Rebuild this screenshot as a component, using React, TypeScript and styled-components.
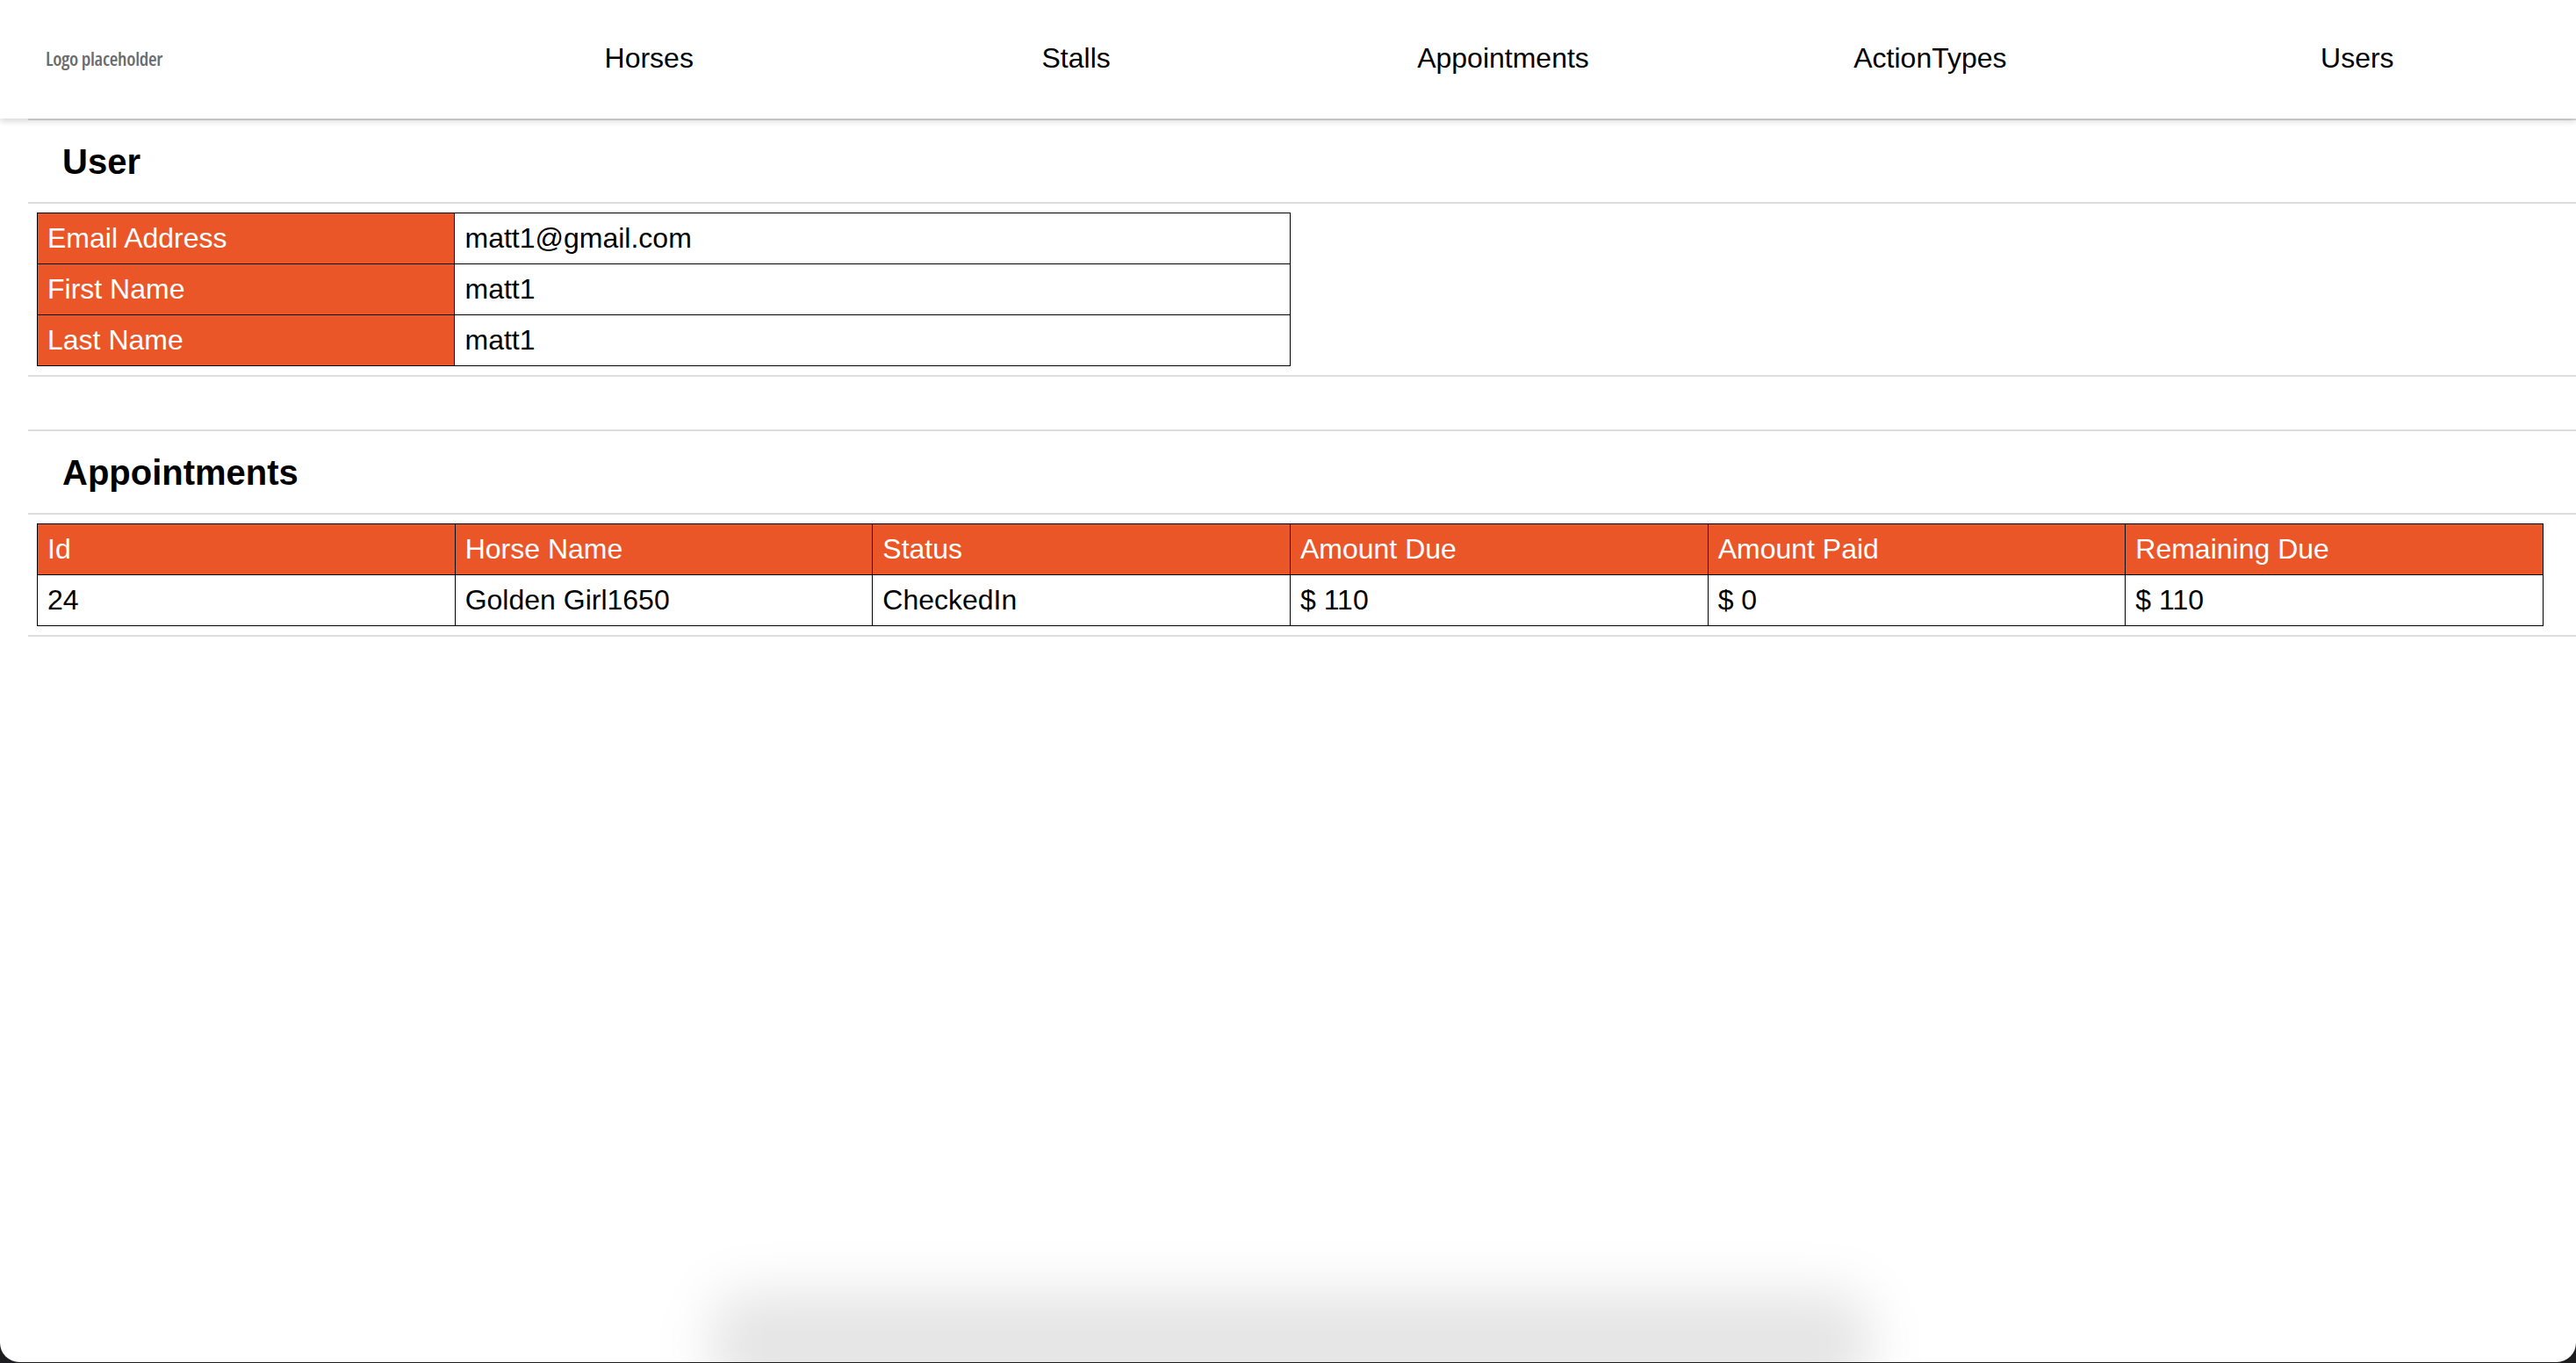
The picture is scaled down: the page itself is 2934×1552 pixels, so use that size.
import styled, { createGlobalStyle } from 'styled-components'

const GlobalStyle = createGlobalStyle`
  html, body {
    margin: 0;
    padding: 0;
    background: #1d1d1f;
  }
  body {
    font-family: "Liberation Sans", Arial, sans-serif;
    color: #000000;
  }
`

const Window = styled.div`
  position: relative;
  height: 1551px;
  background: #FFFFFF;
  border-bottom-left-radius: 22px;
  border-bottom-right-radius: 22px;
  overflow: hidden;
`

const Header = styled.header`
  position: relative;
  z-index: 1;
  display: flex;
  align-items: center;
  height: 135px;
  padding: 0 6px 3px 0;
  box-sizing: border-box;
  background: #FFFFFF;
  box-shadow: 0 3px 7px rgba(0, 0, 0, 0.16);
`

const Logo = styled.div`
  width: 496px;
  box-sizing: border-box;
  padding-left: 52px;
  font-family: "Open Sans", "Liberation Sans", sans-serif;
  font-stretch: 80%;
  font-weight: 600;
  font-size: 22px;
  color: #6b6b6b;
  letter-spacing: -0.3px;
`

const Nav = styled.nav`
  flex: 1;
  display: flex;
`

const NavLink = styled.a`
  flex: 1;
  text-align: center;
  font-size: 32px;
  color: #000000;
  text-decoration: none;
  cursor: pointer;
`

const Content = styled.main`
  display: flex;
  flex-direction: column;
  gap: 60px;
  margin-left: 32px;
`

const Card = styled.section`
  border-top: 2px solid #dddddd;
  border-bottom: 2px solid #dddddd;
`

const CardTitle = styled.h2`
  margin: 0;
  padding: 24px 0 23px 39px;
  border-bottom: 2px solid #dddddd;
  font-size: 40px;
  line-height: 46px;
  font-weight: 700;
`

const CardBody = styled.div`
  padding: 10px 0;
`

const Table = styled.table<{ $half?: boolean }>`
  margin-left: 10px;
  width: ${p => (p.$half ? 'calc((100% - 47px) / 2)' : 'calc(100% - 47px)')};
  border-collapse: collapse;
  table-layout: fixed;
  font-size: 32px;
  line-height: 37px;
`

const Th = styled.th`
  padding: 10px 11px;
  border: 1px solid #000000;
  background: #EB5629;
  color: #FFFFFF;
  font-weight: 400;
  text-align: left;
  white-space: nowrap;
`

const Td = styled.td`
  padding: 10px 11px;
  border: 1px solid #000000;
  background: #FFFFFF;
  color: #000000;
  text-align: left;
  white-space: nowrap;
`

const DockShadow = styled.div`
  position: absolute;
  left: 810px;
  bottom: -40px;
  width: 1320px;
  height: 120px;
  background: rgba(0, 0, 0, 0.1);
  filter: blur(30px);
  border-radius: 40px;
  pointer-events: none;
`

const user = [
  ['Email Address', 'matt1@gmail.com'],
  ['First Name', 'matt1'],
  ['Last Name', 'matt1'],
]

const columns = ['Id', 'Horse Name', 'Status', 'Amount Due', 'Amount Paid', 'Remaining Due']

const appointments = [
  { id: 24, horse: 'Golden Girl1650', status: 'CheckedIn', due: 110, paid: 0 },
]

export default function App() {
  return (
    <>
      <GlobalStyle />
      <Window>
        <Header>
          <Logo>Logo placeholder</Logo>
          <Nav>
            <NavLink>Horses</NavLink>
            <NavLink>Stalls</NavLink>
            <NavLink>Appointments</NavLink>
            <NavLink>ActionTypes</NavLink>
            <NavLink>Users</NavLink>
          </Nav>
        </Header>
        <Content>
          <Card>
            <CardTitle>User</CardTitle>
            <CardBody>
              <Table $half>
                <colgroup>
                  <col style={{ width: '33.333%' }} />
                  <col />
                </colgroup>
                <tbody>
                  {user.map(([label, value]) => (
                    <tr key={label}>
                      <Th>{label}</Th>
                      <Td>{value}</Td>
                    </tr>
                  ))}
                </tbody>
              </Table>
            </CardBody>
          </Card>
          <Card>
            <CardTitle>Appointments</CardTitle>
            <CardBody>
              <Table>
                <thead>
                  <tr>
                    {columns.map(c => <Th key={c}>{c}</Th>)}
                  </tr>
                </thead>
                <tbody>
                  {appointments.map(a => (
                    <tr key={a.id}>
                      <Td>{a.id}</Td>
                      <Td>{a.horse}</Td>
                      <Td>{a.status}</Td>
                      <Td>$ {a.due}</Td>
                      <Td>$ {a.paid}</Td>
                      <Td>$ {a.due - a.paid}</Td>
                    </tr>
                  ))}
                </tbody>
              </Table>
            </CardBody>
          </Card>
        </Content>
        <DockShadow />
      </Window>
    </>
  )
}
